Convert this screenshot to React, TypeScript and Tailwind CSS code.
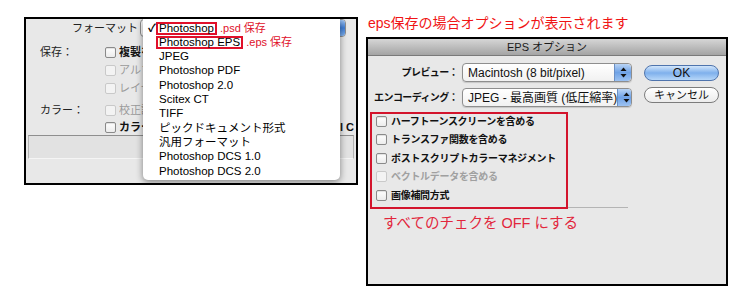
const ui = "font-['Liberation_Sans','Noto_Sans_CJK_JP',sans-serif]";

function Check({ dim }: { dim?: boolean }) {
  return (
    <span
      className={
        dim
          ? "block w-[11px] h-[11px] shrink-0 rounded-[2px] border border-[#c9c9c9] bg-[#f3f3f3]"
          : "block w-[11px] h-[11px] shrink-0 rounded-[2px] border border-[#8a8a8a] bg-gradient-to-b from-white to-[#ececec] shadow-[inset_0_1px_1px_rgba(0,0,0,0.12)]"
      }
    />
  );
}

function Stepper() {
  return (
    <span className="flex items-center justify-center w-[17px] h-full shrink-0 rounded-r-[4px] border-l border-[#6b8fc4] bg-gradient-to-b from-[#b9d4f5] via-[#6fa2e6] to-[#9cc2f2]">
      <svg width="7" height="11" viewBox="0 0 7 11">
        <path d="M3.5 0.5 L6.5 4 H0.5 Z" fill="#111" />
        <path d="M3.5 10.5 L6.5 7 H0.5 Z" fill="#111" />
      </svg>
    </span>
  );
}

function Popup({ children }: { children: React.ReactNode }) {
  return (
    <div className="flex items-center w-[170px] h-[19px] rounded-[4px] border border-[#8e8e8e] bg-gradient-to-b from-white to-[#f1f1f1] shadow-[0_1px_1px_rgba(0,0,0,0.15)] overflow-hidden">
      <span className="flex-1 pl-[5px] text-[12px] text-[#111] whitespace-nowrap">{children}</span>
      <Stepper />
    </div>
  );
}

// text of the save dialog that runs under the open menu is cut where the menu starts
function Under({ children, bold, dim }: { children: React.ReactNode; bold?: boolean; dim?: boolean }) {
  return (
    <span className="ml-[3px] w-[24px] overflow-hidden whitespace-nowrap">
      <span className={bold ? "font-bold text-[#111]" : dim ? "text-[#9a9a9a]" : "text-[#111]"}>{children}</span>
    </span>
  );
}

const menuItems = ["JPEG", "Photoshop PDF", "Photoshop 2.0", "Scitex CT", "TIFF", "ピックドキュメント形式", "汎用フォーマット", "Photoshop DCS 1.0", "Photoshop DCS 2.0"];

const options = [
  { label: "ハーフトーンスクリーンを含める" },
  { label: "トランスファ関数を含める" },
  { label: "ポストスクリプトカラーマネジメント" },
  { label: "ベクトルデータを含める", dim: true },
  { label: "画像補間方式" },
];

export default function App() {
  return (
    <div className={`flex w-[750px] h-[300px] bg-white ${ui}`}>
      {/* save dialog with the format menu open */}
      <div className="relative mt-[17px] ml-[24px] w-[334px] h-[168px] shrink-0 border-2 border-black bg-[#e8e8e8] overflow-hidden">
        <div className="flex items-center h-[18px]">
          <span className="w-[112px] text-right text-[11px] text-[#222]">フォーマット</span>
          <div className="ml-[2px] flex w-[206px] h-[18px] rounded-[4px] border border-[#8e8e8e] bg-white overflow-hidden">
            <span className="flex-1" />
            <span className="w-[7px] bg-gradient-to-b from-[#9cc2f2] via-[#3f7fd8] to-[#7fb0ee]" />
          </div>
        </div>
        <div className="h-[6px]" />
        <div className="flex items-center h-[18px] text-[11px]">
          <span className="w-[79px] pl-[14px] text-[#222]">保存：</span>
          <Check />
          <Under bold>複製を保存</Under>
        </div>
        <div className="flex items-center h-[18px] text-[11px]">
          <span className="w-[79px]" />
          <Check dim />
          <Under dim>アルファチャンネル</Under>
        </div>
        <div className="flex items-center h-[18px] text-[11px]">
          <span className="w-[79px]" />
          <Check dim />
          <Under dim>レイヤー</Under>
        </div>
        <div className="h-[4px]" />
        <div className="flex items-center h-[18px] text-[11px]">
          <span className="w-[79px] pl-[14px] text-[#222]">カラー：</span>
          <Check dim />
          <Under dim>校正設定</Under>
        </div>
        <div className="flex items-center h-[16px] text-[11px]">
          <span className="w-[79px] shrink-0" />
          <Check />
          <Under bold>カラープロファイル</Under>
          <span className="flex-1" />
          <span className="mr-[2px] w-[14px] overflow-hidden whitespace-nowrap font-bold text-[#111]">l Co</span>
        </div>
        <div className="mx-[2px] h-[24px] border border-[#b3b3b3] border-t-[#8f8f8f] border-b-[#f5f5f5] bg-[#e2e2e2]" />

        {/* open popup menu */}
        <div className="absolute left-[117px] top-0 w-[197px] h-[161px] pt-[2px] rounded-b-[5px] bg-white shadow-[0_2px_7px_rgba(0,0,0,0.45)] text-[11.5px] text-black">
          <div className="relative flex items-center h-[14.3px] pl-[16px]">
            <span className="absolute left-[5px] text-[11px] font-bold">✓</span>
            <span className="-ml-[3px] flex items-center h-[13px] px-[1px] border-2 border-[#e0102a]">Photoshop</span>
            <span className="ml-[3px] text-[11px] text-[#e0102a]">.psd 保存</span>
          </div>
          <div className="flex items-center h-[14.3px] pl-[16px]">
            <span className="-ml-[3px] flex items-center h-[13px] px-[1px] border-2 border-[#e0102a]">Photoshop EPS</span>
            <span className="ml-[3px] text-[11px] text-[#e0102a]">.eps 保存</span>
          </div>
          {menuItems.map((m) => (
            <div key={m} className="flex items-center h-[14.3px] pl-[16px] whitespace-nowrap">
              {m}
            </div>
          ))}
        </div>
      </div>

      {/* EPS options */}
      <div className="ml-[8px] pt-[13px] flex flex-col">
        <div className="h-[20px] leading-[20px] pl-[2px] text-[14px] text-[#f01414] whitespace-nowrap">eps保存の場合オプションが表示されます</div>
        <div className="mt-[4px] w-[362px] h-[249px] border-2 border-black bg-[#e8e8e8] flex flex-col">
          <div className="h-[17px] flex items-center justify-center border-b border-[#7a7a7a] bg-gradient-to-b from-[#d6d6d6] to-[#a4a4a4] text-[11px] text-[#1a1a1a]">
            EPS オプション
          </div>
          <div className="flex mt-[7px]">
            <div className="flex flex-col">
              <div className="flex items-center">
                <span className="w-[90px] text-right text-[10px] tracking-[-0.6px] font-bold text-[#111] whitespace-nowrap">プレビュー：</span>
                <span className="ml-[4px]">
                  <Popup>Macintosh (8 bit/pixel)</Popup>
                </span>
              </div>
              <div className="flex items-center mt-[6px]">
                <span className="w-[90px] text-right text-[10px] tracking-[-0.6px] font-bold text-[#111] whitespace-nowrap">エンコーディング：</span>
                <span className="ml-[4px]">
                  <Popup>JPEG - 最高画質 (低圧縮率)</Popup>
                </span>
              </div>
            </div>
            <div className="ml-[12px] flex flex-col">
              <button className="mt-[2px] w-[75px] h-[16px] rounded-full border border-[#4f74ad] bg-gradient-to-b from-[#d2e6fb] via-[#7fb0ec] to-[#b7d7f8] text-[12px] leading-none text-[#111]">
                OK
              </button>
              <button className="mt-[6px] w-[75px] h-[16px] rounded-full border border-[#7c7c7c] bg-gradient-to-b from-white to-[#ececec] text-[11px] leading-none text-[#111]">
                キャンセル
              </button>
            </div>
          </div>
          <div className="relative mt-[5px] ml-[2px] w-[258px] pt-[2px] pb-[5px] border-b border-[#b4b4b4]">
            {options.map((o, i) => (
              <div key={o.label} className={i === 0 ? "flex items-center h-[14px]" : "flex items-center h-[14px] mt-[4.5px]"}>
                <span className="ml-[6px]">
                  <Check dim={o.dim} />
                </span>
                <span className={o.dim ? "ml-[4px] text-[10px] tracking-[-0.3px] font-bold text-[#a0a0a0] whitespace-nowrap" : "ml-[4px] text-[10px] tracking-[-0.3px] font-bold text-[#111] whitespace-nowrap"}>
                  {o.label}
                </span>
              </div>
            ))}
            <div className="absolute left-0 top-0 w-[198px] h-[97px] border-2 border-[#d3142c]" />
          </div>
          <div className="mt-[5px] h-[20px] leading-[20px] pl-[15px] text-[14.5px] text-[#e2263c] whitespace-nowrap">
            すべてのチェクを OFF にする
          </div>
        </div>
      </div>
    </div>
  );
}
